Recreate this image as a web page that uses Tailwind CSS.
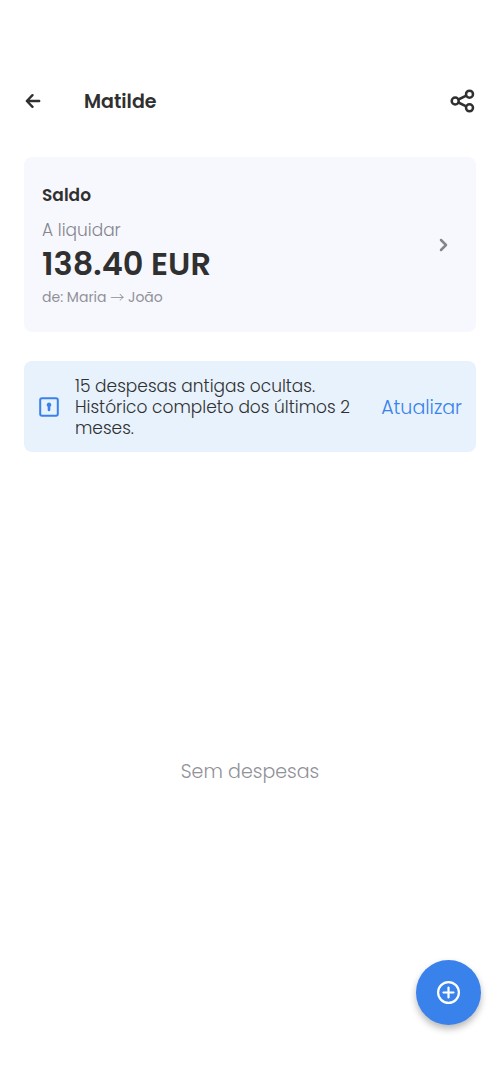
<!DOCTYPE html>
<html lang="pt">
<head>
<meta charset="utf-8">
<meta name="viewport" content="width=device-width, initial-scale=1">
<title>Matilde</title>
<script src="https://cdn.jsdelivr.net/npm/@tailwindcss/browser@4"></script>
</head>
<body class="bg-white text-[#303030] font-['Poppins','Inter','Liberation_Sans',sans-serif]">
<div class="flex min-h-screen flex-col px-6 pt-[77px]">
  <header class="flex h-12 items-center">
    <button type="button" aria-label="Voltar" class="flex w-[60px] items-center">
      <svg class="size-[18px]" viewBox="0 0 18 18" fill="none" stroke="currentColor" stroke-width="2.4" stroke-linecap="round" stroke-linejoin="round" aria-hidden="true"><path d="M15.200 9H3M8.500 3.200 2.800 9l5.700 5.800"/></svg>
    </button>
    <h1 class="flex-1 pt-0.5 text-[19px] leading-6 font-semibold">Matilde</h1>
    <button type="button" aria-label="Partilhar">
      <svg class="h-7 w-[26px]" viewBox="0 0 26 28" fill="none" stroke="currentColor" stroke-width="2.5" aria-hidden="true"><circle cx="5.200" cy="14" r="3.500"/><circle cx="19.500" cy="7.200" r="3.500"/><circle cx="19.500" cy="20.800" r="3.500"/><path d="m8.400 12.500 7.900-3.800M8.400 15.500l7.900 3.800"/></svg>
    </button>
  </header>

  <main class="flex flex-1 flex-col pt-8">
    <button type="button" class="flex items-center rounded-lg bg-[#f7f8fe] pt-[26px] pr-6 pb-[25px] pl-[18px] text-left">
      <span class="flex flex-1 flex-col">
        <span class="text-[17px] leading-6 font-semibold">Saldo</span>
        <span class="mt-[11px] text-[17px] leading-6 font-light text-[#85858d]">A liquidar</span>
        <span class="text-[32px] leading-[43px] font-semibold">138.40 EUR</span>
        <span class="mt-px text-[14px] leading-5 text-[#919197]">de: Maria <span class="font-['Noto_Sans_CJK_JP',sans-serif] font-light">→</span> João</span>
      </span>
      <svg class="h-4 w-[18px] text-[#85858b]" viewBox="0 0 18 16" fill="none" stroke="currentColor" stroke-width="2.500" stroke-linecap="round" stroke-linejoin="round" aria-hidden="true"><path d="m7 3 5 5-5 5"/></svg>
    </button>

    <section class="mt-[29px] flex items-center rounded-lg bg-[#e7f2fd] pt-[14px] pr-[14px] pb-[13px] pl-[15px]">
      <svg class="size-5 shrink-0 text-[#3982ec]" viewBox="0 0 20 20" fill="none" aria-hidden="true"><rect x="1.200" y="1.200" width="17.600" height="17.600" rx="1.800" stroke="currentColor" stroke-width="2"/><path d="M10 5.600a2.300 2.300 0 0 0-1.300 4.200V13a1.300 1.300 0 0 0 2.600 0V9.800a2.300 2.300 0 0 0-1.300-4.200Z" fill="currentColor"/></svg>
      <p class="ml-4 flex-1 text-[17px] leading-[21px] font-light pt-px">15 despesas antigas ocultas.<br>Histórico completo dos últimos 2<br>meses.</p>
      <button type="button" class="pt-0.5 text-[19px] leading-6 font-light text-[#3982ec]">Atualizar</button>
    </section>

    <div class="flex flex-1 items-center justify-center pt-2">
      <p class="text-[19px] leading-6 font-light text-[#919197]">Sem despesas</p>
    </div>
  </main>
</div>

<button type="button" aria-label="Adicionar despesa" class="fixed right-[19px] bottom-[58px] flex size-[65px] items-center justify-center rounded-full bg-[#3982ec] text-white shadow-[0_4px_7px_rgba(0,0,0,0.28)]">
  <svg class="size-[23px]" viewBox="0 0 23 23" fill="none" stroke="currentColor" stroke-width="2.200" stroke-linecap="round" aria-hidden="true"><circle cx="11.500" cy="11.500" r="10.400"/><path d="M11.500 6.500v10M6.500 11.500h10"/></svg>
</button>
</body>
</html>
